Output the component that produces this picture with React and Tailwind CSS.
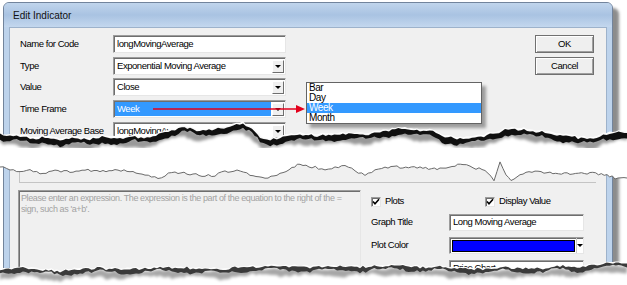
import React from "react";

// deterministic jitter for torn paper edges
function rnd(i, seed) {
  const v = Math.sin(i * 12.9898 + seed * 78.233) * 43758.5453;
  return v - Math.floor(v);
}

function jag(pts, seed, amp, step = 3) {
  const out = [];
  let k = 0;
  for (let i = 0; i < pts.length - 1; i++) {
    const [x0, y0] = pts[i];
    const [x1, y1] = pts[i + 1];
    const n = Math.max(1, Math.round((x1 - x0) / step));
    for (let j = 0; j < n; j++) {
      const t = j / n;
      out.push([x0 + (x1 - x0) * t, y0 + (y1 - y0) * t + (rnd(k++, seed) - 0.5) * amp]);
    }
  }
  out.push(pts[pts.length - 1]);
  return out;
}

const toD = (arr) => arr.map(([x, y], i) => `${i ? "L" : "M"}${x.toFixed(1)},${y.toFixed(1)}`).join(" ");

function band(edge, seed, a, b) {
  const upper = edge.map(([x, y], i) => [x, y + a + rnd(i, seed) * 1.5]);
  const lower = edge.map(([x, y], i) => [x, y + b + Math.sin(x / 9 + seed) * 1.5 + rnd(i, seed + 3) * 1.5]);
  return toD(upper) + " " + lower.reverse().map(([x, y]) => `L${x.toFixed(1)},${y.toFixed(1)}`).join(" ") + " Z";
}

const TOP_EDGE = jag(
  [
    [0, 133], [10, 135], [20, 134], [30, 137], [45, 136], [60, 138], [75, 136], [90, 138], [105, 135],
    [120, 137], [135, 135], [150, 136], [165, 131], [175, 128], [182, 124], [190, 127], [200, 129],
    [215, 127], [230, 125], [243, 122], [252, 128], [260, 135], [267, 138], [280, 136], [300, 133],
    [320, 134], [340, 132], [360, 133], [380, 131], [395, 128], [405, 127], [420, 129], [433, 130],
    [445, 135], [460, 137], [475, 136], [490, 133], [505, 128], [515, 127], [530, 129], [545, 131],
    [560, 133], [575, 136], [590, 137], [600, 134], [613, 131], [627, 131],
  ],
  4,
  2.2
);

// bottom section local coords (section starts at y=148)
const MID_EDGE = jag(
  [
    [0, 18], [10, 22], [20, 24], [30, 22], [40, 25], [55, 23], [70, 24], [85, 22], [100, 23], [115, 22],
    [130, 23], [145, 26], [158, 31], [165, 27], [175, 24], [190, 26], [205, 28], [215, 27], [225, 24],
    [237, 22], [250, 27], [265, 30], [280, 26], [292, 20], [300, 16], [312, 19], [325, 21], [335, 20],
    [345, 17], [355, 22], [365, 28], [375, 22], [385, 19], [400, 19], [420, 20], [440, 21], [455, 18],
    [463, 16], [470, 19], [485, 22], [494, 32], [500, 15], [506, 27], [511, 32], [520, 26], [535, 24],
    [550, 25], [570, 26], [590, 25], [607, 27], [615, 30], [627, 30],
  ],
  9,
  2.4
);

const LOW_EDGE = jag(
  [
    [0, 120], [20, 118], [40, 120], [60, 122], [80, 120], [100, 119], [130, 120], [160, 118], [190, 119],
    [220, 120], [250, 118], [280, 117], [310, 118], [340, 117], [360, 118], [380, 117], [400, 116],
    [420, 118], [440, 118], [460, 119], [480, 120], [500, 118], [520, 119], [540, 120], [560, 117],
    [580, 118], [600, 115], [613, 114], [627, 114],
  ],
  17,
  2
);

function TopTear() {
  return (
    <svg className="absolute left-0 top-0 pointer-events-none" width="627" height="148">
      <defs>
        <filter id="blurA" x="-5%" y="-50%" width="110%" height="200%">
          <feGaussianBlur stdDeviation="1.8" />
        </filter>
      </defs>
      <path d={toD(TOP_EDGE) + " L627,148 L0,148 Z"} fill="#fff" />
      <path d={band(TOP_EDGE, 5, 3, 10)} fill="rgba(0,0,0,0.4)" filter="url(#blurA)" />
      <path d={band(TOP_EDGE, 2, 1, 6)} fill="#101010" />
    </svg>
  );
}

function MidTear() {
  return (
    <svg className="absolute left-0 top-0 pointer-events-none" width="627" height="137">
      <defs>
        <filter id="blurB" x="-5%" y="-50%" width="110%" height="200%">
          <feGaussianBlur stdDeviation="1.6" />
        </filter>
      </defs>
      <path d={"M0,0 L" + toD(MID_EDGE).slice(1) + " L627,0 Z"} fill="#fff" />
      <path d={toD(MID_EDGE)} fill="none" stroke="#6a6a6a" strokeWidth="1" />
      <path d={toD(LOW_EDGE) + " L627,137 L0,137 Z"} fill="#fff" />
      <path d={band(LOW_EDGE, 8, 3, 9)} fill="rgba(0,0,0,0.35)" filter="url(#blurB)" />
      <path d={band(LOW_EDGE, 6, 0.5, 4)} fill="#3a3a3a" />
    </svg>
  );
}

const inset =
  "border border-t-[#9c9c9c] border-l-[#9c9c9c] border-r-[#e6e6e6] border-b-[#e6e6e6] shadow-[inset_1px_1px_0_#6e6e6e]";

function Triangle() {
  return <div className="w-0 h-0 border-l-[3px] border-r-[3px] border-t-[3px] border-l-transparent border-r-transparent border-t-black" />;
}

function DropButton() {
  return (
    <div className="w-[12px] h-[13px] mr-[1px] flex items-center justify-center bg-[#f0f0f0] border border-t-white border-l-white border-r-[#6e6e6e] border-b-[#6e6e6e]">
      <Triangle />
    </div>
  );
}

function TextBox({ value, className = "" }) {
  return (
    <div className={`w-[173px] h-[18px] bg-white flex items-center pl-[3px] ${inset} ${className}`}>
      {value}
    </div>
  );
}

function SelectBox({ value, selected }) {
  return (
    <div className={`w-[173px] h-[18px] bg-white flex items-center ${inset}`}>
      <div className={`flex-1 h-[14px] ml-[1px] mr-[1px] flex items-center pl-[2px] ${selected ? "bg-[#3399ff] text-white" : ""}`}>
        {value}
      </div>
      <DropButton />
    </div>
  );
}

function Row({ label, children, className = "" }) {
  return (
    <div className={`flex items-center ${className}`}>
      <div className="w-[93px] whitespace-nowrap">{label}</div>
      {children}
    </div>
  );
}

function WinButton({ children }) {
  return (
    <div className="w-[59px] h-[18px] flex items-center justify-center bg-[#efefef] border border-[#707070] shadow-[inset_1px_1px_0_#ffffff,inset_-1px_-1px_0_#a0a0a0]">
      {children}
    </div>
  );
}

function CheckBox({ label }) {
  return (
    <div className="flex items-center">
      <div className={`w-[10px] h-[10px] bg-white flex items-center justify-center ${inset}`}>
        <svg width="8" height="8" viewBox="0 0 8 8">
          <path d="M1,3.5 L3,5.8 L7,1.2" fill="none" stroke="#000" strokeWidth="1.6" />
        </svg>
      </div>
      <span className="ml-[4px]">{label}</span>
    </div>
  );
}

export default function App() {
  return (
    <div className="w-[627px] h-[285px] bg-white overflow-hidden text-[9.5px] tracking-[-0.45px] text-black font-['Liberation_Sans',Arial,sans-serif]">
      {/* top half of the dialog */}
      <div className="relative h-[148px] overflow-hidden">
        <div className="ml-[3px] mt-[2px] w-[610px] h-[170px] rounded-t-[6px] border border-[#72849c] bg-[#bdd3ec] shadow-[6px_6px_3px_rgba(0,0,0,0.45)]">
          <div className="h-[24px] rounded-t-[5px] bg-gradient-to-b from-[#c0d5ec] via-[#a9c3e2] to-[#c3d7ee] pl-[9px] flex items-center text-[10px] tracking-normal text-[#111]">
            Edit Indicator
          </div>
          <div className="px-[5px] h-full">
            <div className="h-full border border-[#9db2cb] bg-[#f0f0f0] flex pt-[7px] pl-[10px] pr-[12px]">
              <div className="flex flex-col">
                <Row label="Name for Code">
                  <TextBox value="longMovingAverage" />
                </Row>
                <Row label="Type" className="mt-[4px]">
                  <SelectBox value="Exponential Moving Average" />
                </Row>
                <Row label="Value" className="mt-[3px]">
                  <SelectBox value="Close" />
                </Row>
                <Row label="Time Frame" className="mt-[4px]">
                  <SelectBox value="Week" selected />
                </Row>
                <Row label="Moving Average Base" className="mt-[4px]">
                  <SelectBox value="longMovingAverage" />
                </Row>
              </div>
              <div className="ml-auto flex flex-col gap-[4px]">
                <WinButton>OK</WinButton>
                <WinButton>Cancel</WinButton>
              </div>
            </div>
          </div>
        </div>

        {/* open list of the Time Frame box */}
        <div className="absolute left-[306px] top-[82px] w-[176px] bg-white border border-[#646464] shadow-[4px_4px_3px_rgba(0,0,0,0.35)] text-[10px] leading-[10px]">
          <div className="h-[10px] pl-[2px]">Bar</div>
          <div className="h-[10px] pl-[2px]">Day</div>
          <div className="h-[10px] pl-[2px] bg-[#3399ff] text-white">Week</div>
          <div className="h-[10px] pl-[2px]">Month</div>
        </div>

        <svg className="absolute left-0 top-0 pointer-events-none" width="627" height="148">
          <line x1="153" y1="109" x2="298" y2="109" stroke="#e3001b" strokeWidth="1.6" />
          <polygon points="296,105 305,109 296,113" fill="#e3001b" />
        </svg>

        <TopTear />
      </div>

      {/* bottom half of the dialog */}
      <div className="relative h-[137px] overflow-hidden">
        <div className="ml-[3px] mt-[2px] w-[610px] h-[125px] border-x border-[#72849c] bg-[#bdd3ec] px-[5px] shadow-[6px_6px_3px_rgba(0,0,0,0.45)]">
          <div className="h-full border-x border-[#9db2cb] bg-[#f0f0f0]">
            <div className="ml-[9px] mr-[10px] h-[33px] border-l border-b border-[#c4c4c4]" />
            <div className="flex mt-[7px]">
              <div className={`ml-[8px] w-[343px] h-[100px] bg-[#f0f0f0] px-[2px] pt-[2px] leading-[10.5px] text-[9px] tracking-[-0.4px] text-[#a3a3a3] ${inset}`}>
                Please enter an expression. The expression is the part of the equation to the right of the = sign, such as 'a+b'.
              </div>
              <div className="ml-[10px] flex flex-col">
                <div className="flex mt-[6px] h-[11px] items-center">
                  <div className="w-[114px]">
                    <CheckBox label="Plots" />
                  </div>
                  <CheckBox label="Display Value" />
                </div>
                <div className="flex items-center mt-[7px]">
                  <div className="w-[78px]">Graph Title</div>
                  <div className={`w-[135px] h-[17px] bg-white flex items-center pl-[3px] ${inset}`}>Long Moving Average</div>
                </div>
                <div className="flex items-center mt-[6px]">
                  <div className="w-[78px]">Plot Color</div>
                  <div className={`w-[135px] h-[17px] bg-white flex items-center ${inset}`}>
                    <div className="ml-[2px] w-[123px] h-[12px] bg-[#0000ff] border border-black" />
                    <div className="flex-1 h-full flex items-center justify-center border-l border-[#c8c8c8] ml-[1px]">
                      <Triangle />
                    </div>
                  </div>
                </div>
                <div className="flex items-center mt-[6px]">
                  <div className="w-[78px]">Graph Area</div>
                  <div className={`w-[135px] h-[17px] bg-white flex items-center pl-[3px] ${inset}`}>Price Chart</div>
                </div>
              </div>
            </div>
          </div>
        </div>
        <MidTear />
      </div>
    </div>
  );
}
